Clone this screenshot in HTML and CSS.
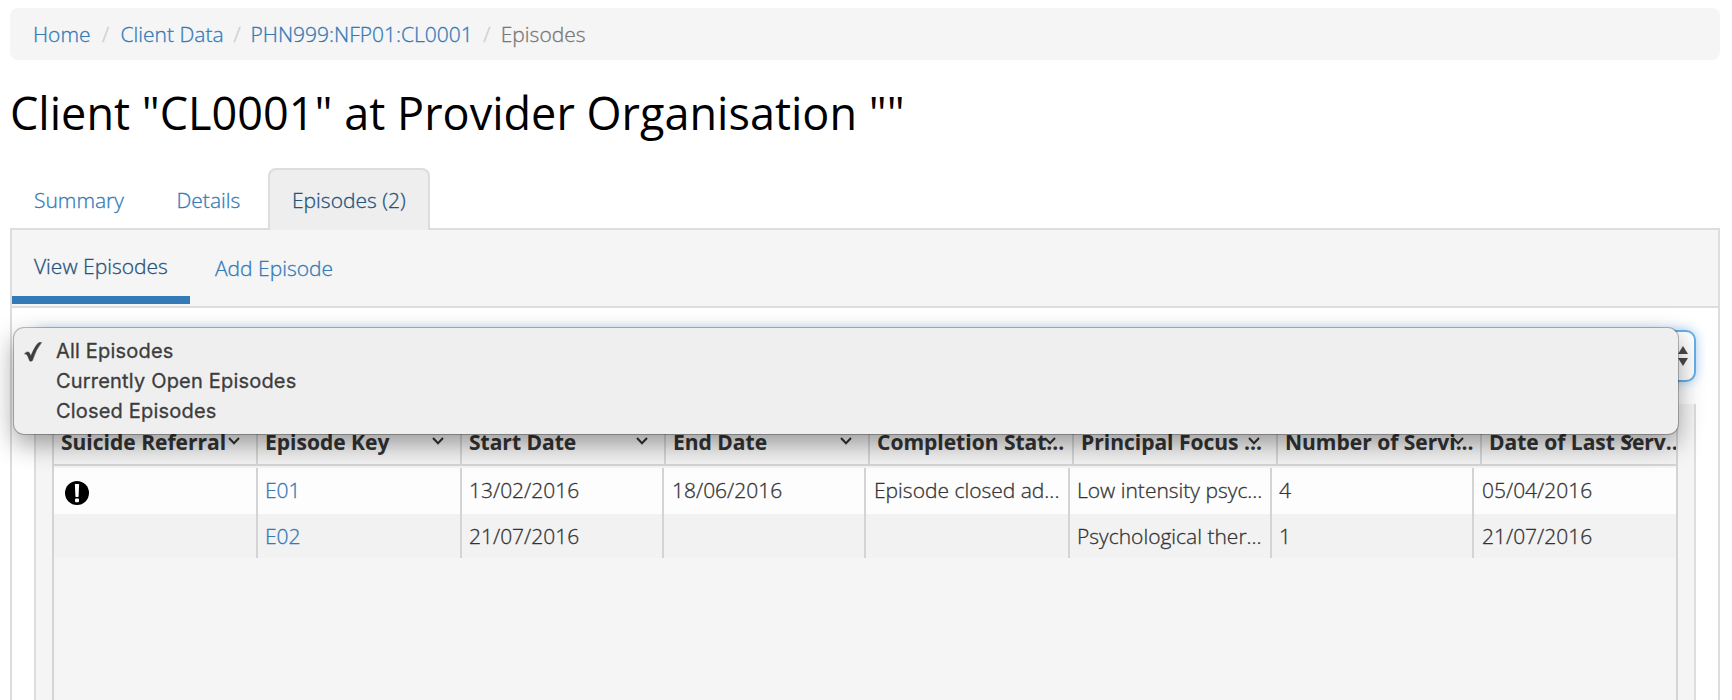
FILE: index.html
```html
<!DOCTYPE html>
<html lang="en">
<head>
<meta charset="utf-8">
<title>Client Episodes</title>
<link rel="stylesheet" href="styles.css">
</head>
<body>
<nav class="breadcrumb"><a>Home</a><i class="sep1">/</i><a>Client Data</a><i class="sep2">/</i><a>PHN999:NFP01:CL0001</a><i class="sep3">/</i><span>Episodes</span></nav>
<h1>Client "CL0001" at Provider Organisation ""</h1>
<div class="tabs"><a class="tab t1">Summary</a><a class="tab t2">Details</a><a class="tab active">Episodes (2)</a></div>
<main class="panel">
  <div class="subnav"><a class="sub current">View Episodes</a><a class="sub add">Add Episode</a></div>
  <div class="content">
    <div class="select">
      <svg width="10" height="20" viewBox="0 0 10 20"><path d="M0 8L5 0L10 8ZM0 12H10L5 20Z" fill="#4a4a4a"/></svg>
    </div>
    <div class="well">
      <div class="grid">
        <div class="head">
          <div class="hcell"><b>Suicide Referral</b><svg class="chev" viewBox="0 0 12 8"><path d="M1 1L6 6.3L11 1"/></svg></div>
          <div class="hcell"><b>Episode Key</b><svg class="chev" viewBox="0 0 12 8"><path d="M1 1L6 6.3L11 1"/></svg></div>
          <div class="hcell"><b>Start Date</b><svg class="chev" viewBox="0 0 12 8"><path d="M1 1L6 6.3L11 1"/></svg></div>
          <div class="hcell"><b>End Date</b><svg class="chev" viewBox="0 0 12 8"><path d="M1 1L6 6.3L11 1"/></svg></div>
          <div class="hcell"><b>Completion Stat...</b><svg class="chev" viewBox="0 0 12 8"><path d="M1 1L6 6.3L11 1"/></svg></div>
          <div class="hcell"><b>Principal Focus ...</b><svg class="chev" viewBox="0 0 12 8"><path d="M1 1L6 6.3L11 1"/></svg></div>
          <div class="hcell"><b>Number of Servi...</b><svg class="chev" viewBox="0 0 12 8"><path d="M1 1L6 6.3L11 1"/></svg></div>
          <div class="hcell last"><b>Date of Last Serv..</b><svg class="chev" viewBox="0 0 12 8"><path d="M1 1L6 6.3L11 1"/></svg></div>
        </div>
        <div class="row">
          <div class="cell"><svg class="alert" viewBox="0 0 24 24"><circle cx="12" cy="12" r="12"/><path d="M9.9 3.6Q9.9 3 10.5 3H13.5Q14.1 3 14.1 3.6L13.6 15.3Q13.5 16 12.9 16H11.1Q10.5 16 10.4 15.3Z" fill="#fff"/><rect x="10" y="17.6" width="4" height="3.6" rx="1" fill="#fff"/></svg></div>
          <div class="cell"><a>E01</a></div><div class="cell">13/02/2016</div><div class="cell wide">18/06/2016</div><div class="cell wide">Episode closed ad...</div><div class="cell">Low intensity psyc...</div><div class="cell">4</div><div class="cell wide">05/04/2016</div>
        </div>
        <div class="row alt">
          <div class="cell"></div><div class="cell"><a>E02</a></div><div class="cell">21/07/2016</div><div class="cell"></div><div class="cell"></div><div class="cell">Psychological ther...</div><div class="cell">1</div><div class="cell wide">21/07/2016</div>
        </div>
      </div>
    </div>
  </div>
</main>
<div class="menu">
  <div class="option"><svg class="check" viewBox="0 0 18 20"><path d="M0.5 11.8Q2.8 9 5 10.3L6.8 14Q11 4 14.6 0.8Q16.2 0.2 17.5 0.6Q12 7 8.4 18.6Q6.8 19.8 5.6 18.8Q3.8 13.2 2.4 12.2Q1.2 11.7 0.5 11.8Z"/></svg><span>All Episodes</span></div>
  <div class="option"><span>Currently Open Episodes</span></div>
  <div class="option"><span>Closed Episodes</span></div>
</div>
</body>
</html>
```
FILE: styles.css
```css
* { box-sizing: border-box; }
body { margin: 0; padding: 8px 12px 0 10px; height: 700px; overflow: hidden; background: #fff; color: #333; font: 300 21px/30px "Open Sans", sans-serif; -webkit-text-stroke: .3px; }
a { color: #337ab7; }
svg { display: block; }
.breadcrumb { display: flex; height: 52px; padding: 11px 23px; border-radius: 8px; background: #f5f5f5; white-space: nowrap; }
.breadcrumb i { color: #ccc; font-style: normal; text-align: center; }
.breadcrumb .sep1 { width: 30px; }
.breadcrumb .sep2 { width: 27px; }
.breadcrumb .sep3 { width: 28px; }
.breadcrumb span { color: #777; }
h1 { margin: 22px 0 0; height: 63px; color: #000; font-size: 45px; font-weight: 400; line-height: 62px; letter-spacing: .02px; white-space: nowrap; -webkit-text-stroke: 0; }
.tabs { display: flex; height: 62px; margin-top: 23px; margin-bottom: -2px; position: relative; z-index: 1; }
.tab { height: 62px; padding: 17px 24px 0; white-space: nowrap; }
.t1 { width: 143px; }
.t2 { width: 115px; padding-left: 23.5px; }
.tab.active { width: 162px; padding-left: 22px; border: 2px solid #ddd; border-bottom: 0; border-radius: 8px 8px 0 0; background: #eee; color: #23527c; padding-top: 15px; }
.panel { height: 480px; border: 2px solid #ddd; }
.subnav { display: flex; height: 78px; border-bottom: 2px solid #ddd; background: #f5f5f5; }
.sub { height: 74px; padding-top: 23px; padding-left: 22px; white-space: nowrap; }
.current { width: 178px; padding-top: 21px; border-bottom: 8px solid #337ab7; color: #23527c; }
.add { padding-left: 25px; }
.content { padding: 22px 22px 0; }
.select { display: flex; align-items: center; justify-content: flex-end; height: 52px; padding-right: 6px; border: 2px solid #66afe9; border-radius: 10px; background: #fff; box-shadow: 0 0 12px rgba(102,175,233,.6); }
.well { height: 310px; margin-top: 22px; padding: 0 16px; border: 2px solid #ddd; border-top: 0; background: #f5f5f5; }
.grid { height: 310px; border: 2px solid #d4d4d4; overflow: hidden; }
.head { display: flex; height: 60px; border-bottom: 2px solid #d4d4d4; background: #f3f3f3; }
.hcell { position: relative; flex: 0 0 204px; height: 58px; padding: 21px 0 0 7px; border-right: 2px solid #d4d4d4; white-space: nowrap; }
.hcell b { font-weight: 700; -webkit-text-stroke: .1px; }
.hcell.last { flex-basis: 194px; border: 0; }
.chev { position: absolute; right: 16px; top: 31px; width: 12px; height: 8px; fill: none; stroke: #333; stroke-width: 2; }
.last .chev { right: 44px; }
.row { display: grid; grid-template-columns: 204px 204px 202px 202px 204px 202px 202px 1fr; height: 46px; margin-top: 2px; background: #fdfdfd; }
.row.alt { height: 44px; margin-top: 0; background: #f2f2f2; }
.cell { padding: 7px 0 0 7px; border-right: 2px solid #d4d4d4; white-space: nowrap; }
.cell.wide { padding-left: 8px; }
.cell:last-child { border: 0; }
.alert { width: 24px; height: 24px; margin: 6px 0 0 4px; }
.menu { position: absolute; left: 14px; top: 328px; width: 1664px; height: 106px; padding-top: 8px; border-radius: 10px; background: #efefef; box-shadow: 0 0 0 1px rgba(0,0,0,.25), 0 10px 26px rgba(0,0,0,.38); color: #3d3d3d; font: 400 20px/30px Inter, sans-serif; letter-spacing: .19px; z-index: 5; }
.option { position: relative; height: 30px; padding-left: 42px; white-space: nowrap; }
.check { position: absolute; left: 10px; top: 6px; width: 18px; height: 20px; fill: #3d3d3d; stroke: #3d3d3d; stroke-width: .6; }
```
